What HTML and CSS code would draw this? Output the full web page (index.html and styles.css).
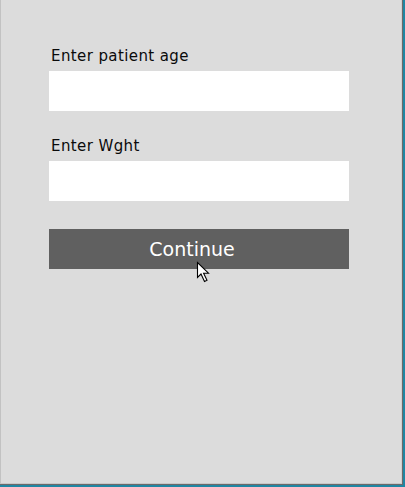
FILE: index.html
```html
<!DOCTYPE html>
<html>
<head>
<meta charset="utf-8">
<link rel="stylesheet" href="styles.css">
</head>
<body>
<div class="frame">
  <div class="window">
    <form class="form">
      <label class="label" for="age">Enter patient age</label>
      <input class="field" id="age" type="text">
      <label class="label second" for="wght">Enter Wght</label>
      <input class="field" id="wght" type="text">
      <button class="btn" type="button">Continue</button>
    </form>
    <svg class="cursor" width="16" height="22" viewBox="0 0 16 22">
      <path d="M1.5 1.5 L1.5 16.5 L5 13 L8.5 20.5 L11 19.3 L7.6 12.2 L12.5 12.2 Z" fill="#fff" stroke="#000" stroke-width="1.1" stroke-linejoin="miter"/>
    </svg>
  </div>
</div>
</body>
</html>
```
FILE: styles.css
```css
html, body {
  margin: 0;
  padding: 0;
}
body {
  background: #1f86a3;
  width: 405px;
  height: 487px;
  overflow: hidden;
}
.frame {
  width: 403px;
  height: 485px;
  background: #6a6a6a;
}
.window {
  position: relative;
  box-sizing: border-box;
  width: 402px;
  height: 484px;
  background: #dcdcdc;
  border-left: 1px solid #c2c2c2;
  border-right: 1px solid #cfcfcf;
  border-bottom: 1px solid #c8c8c8;
  padding: 46px 0 0 48px;
}
.form {
  display: flex;
  flex-direction: column;
  width: 300px;
  margin: 0;
}
.label {
  font-family: "DejaVu Sans", sans-serif;
  font-size: 15px;
  letter-spacing: 0.4px;
  line-height: 20px;
  color: #0a0a0a;
  padding-left: 2px;
  margin-bottom: 5px;
}
.label.second {
  margin-top: 25px;
}
.field {
  box-sizing: border-box;
  width: 300px;
  height: 40px;
  border: none;
  background: #fff;
  margin: 0;
  padding: 0 6px;
  outline: none;
}
.btn {
  box-sizing: border-box;
  width: 300px;
  height: 40px;
  margin-top: 28px;
  border: none;
  background: #606060;
  color: #fff;
  font-family: "DejaVu Sans", sans-serif;
  font-size: 19px;
  padding: 0 14px 0 0;
}
.cursor {
  position: absolute;
  left: 195px;
  top: 261px;
}
```
